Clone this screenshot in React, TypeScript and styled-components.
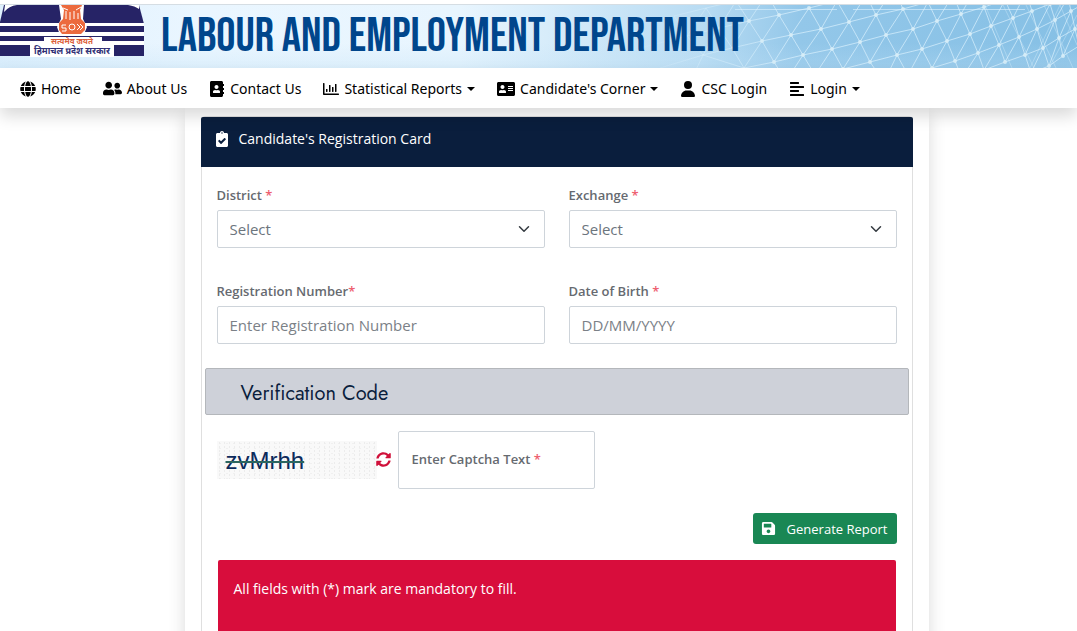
import React from 'react';
import styled, { createGlobalStyle } from 'styled-components';
import { FaGlobe, FaUserFriends, FaAddressBook, FaRegChartBar, FaAddressCard, FaAlignLeft, FaSave, FaSyncAlt, FaClipboardCheck } from 'react-icons/fa';
import { FaUser } from 'react-icons/fa6';

const Global = createGlobalStyle`
  *, *::before, *::after { box-sizing: border-box; }
  body {
    margin: 0;
    background: #fff;
    color: #212529;
    font-family: "Open Sans", "Noto Sans", sans-serif;
    font-size: 14px;
    line-height: 20px;
  }
`;

const Banner = styled.header`
  position: relative;
  display: flex;
  align-items: flex-start;
  height: 64px;
  margin-top: 4px;
  overflow: hidden;
  border-top: 1px solid #d5dde3;
  background:
    linear-gradient(to bottom, transparent 60%, rgba(190, 224, 246, 0.3)),
    linear-gradient(to right, #dff0fd 0, #eaf6ff 200px, #e8f5fe 460px, #b9dcf3 700px, #93c7e9 800px, #86c0e5 100%);
`;

const Mesh = styled.svg`
  position: absolute;
  top: 0;
  left: 600px;
`;

const Emblem = styled.svg`
  flex: none;
  position: relative;
`;

const Title = styled.h1`
  position: relative;
  margin: 0 0 0 16px;
  color: #00468c;
  font: 400 48px/64px "Bebas Neue", "Liberation Sans Narrow", "Liberation Sans", sans-serif;
  white-space: nowrap;
`;

const Nav = styled.nav`
  position: relative;
  display: flex;
  align-items: center;
  gap: 22px;
  height: 40px;
  padding: 1px 20px 0;
  background: #fff;
  box-shadow: 0 8px 16px rgba(0, 0, 0, 0.15);
  z-index: 1;
`;

const NavLink = styled.a`
  display: flex;
  align-items: center;
  gap: 5px;
  color: #000;
  font-family: "Noto Sans", "Open Sans", sans-serif;
  text-decoration: none;
  white-space: nowrap;
`;

const Caret = styled.span`
  border: 4px solid transparent;
  border-top-color: #000;
  border-bottom: 0;
`;

const Page = styled.div`
  padding-left: 36px;
`;

const Panel = styled.main`
  width: 744px;
  max-width: 100%;
  margin: 0 auto;
  padding: 8px 16px 16px;
  background: #fff;
  box-shadow: 0 8px 16px rgba(0, 0, 0, 0.15);
`;

const Card = styled.form`
  border: 1px solid #dfdfdf;
  border-radius: 4px;
`;

const CardHeader = styled.div`
  display: flex;
  align-items: center;
  gap: 9px;
  height: 50px;
  margin: 0 -1px;
  padding: 0 13px 7px;
  border-radius: 2px 2px 0 0;
  background: #0a1e3d;
  color: #fff;
`;

const Heading = styled.h2`
  margin: 0;
  font-size: 14px;
  font-weight: 400;
  line-height: 20px;
`;

const Fields = styled.div`
  display: grid;
  grid-template-columns: 1fr 1fr;
  gap: 24px;
  padding: 18px 15px 24px;
`;

const Field = styled.div`
  display: flex;
  flex-direction: column;
  gap: 5px;
`;

const Label = styled.label`
  color: #666a70;
  font-size: 13px;
  font-weight: 550;
  line-height: 20px;
`;

const Star = styled.span`
  color: #ee6070;
`;

const control = `
  width: 100%;
  height: 38px;
  padding: 0 12px;
  border: 1px solid #ced4da;
  border-radius: 2px;
  background: #fff;
  color: #6c757d;
  font: 400 15px/22px "Open Sans", "Noto Sans", sans-serif;
  appearance: none;
`;

const Input = styled.input`
  ${control}
  &::placeholder { color: #7b8187; opacity: 1; }
`;

const Select = styled.select`
  ${control}
`;

const SelectWrap = styled.div`
  position: relative;
  display: flex;
  margin-bottom: 9px;
`;

const Chevron = styled.svg`
  position: absolute;
  top: 13px;
  right: 15px;
  pointer-events: none;
`;

const Section = styled.h3`
  height: 47px;
  margin: 0 3px;
  padding: 0 35px;
  border: 1px solid #b4b7bb;
  border-radius: 2px;
  background: #ced1d9;
  color: #0a1e3d;
  font: 450 20px/49px "Jost", "Lato", sans-serif;
`;

const CaptchaRow = styled.div`
  display: flex;
  align-items: center;
  padding: 16px 15px;
`;

const Captcha = styled.div`
  display: flex;
  align-items: center;
  width: 160px;
  height: 38px;
  padding: 2px 0 0 9px;
  background-color: #f9f9f9;
  background-image: radial-gradient(#ececec 1px, transparent 1px), radial-gradient(#f0f0f0 1px, transparent 1px);
  background-size: 5px 4px, 7px 5px;
  color: #0c2a5c;
  font: 400 24px/36px "Liberation Sans", sans-serif;
`;

const Code = styled.span`
  text-decoration: line-through 2px #2c6660;
`;

const Refresh = styled.button`
  display: flex;
  padding: 0 0 2px;
  margin: 0 7px 0 -1px;
  border: 0;
  background: none;
  color: #d0103a;
`;

const CaptchaInput = styled(Input)`
  width: 197px;
  height: 58px;
`;

const CaptchaBox = styled.div`
  position: relative;
`;

const FloatingLabel = styled(Label)`
  position: absolute;
  top: 18px;
  left: 14px;
  font-weight: 650;
`;

const Actions = styled.div`
  display: flex;
  justify-content: flex-end;
  padding: 8px 15px 16px;
`;

const Submit = styled.button`
  display: flex;
  align-items: center;
  gap: 11px;
  height: 31px;
  padding: 0 9px 0 8px;
  border: 0;
  border-radius: 3px;
  background: #198754;
  color: #fff;
  font: 400 13px/20px "Open Sans", "Noto Sans", sans-serif;
`;

const Notice = styled.p`
  min-height: 88px;
  margin: 0 16px 16px;
  padding: 19px 16px;
  border-radius: 2px;
  background: #d80d3c;
  color: #fff;
`;

const links = [
  { label: 'Home', icon: FaGlobe, size: 16 },
  { label: 'About Us', icon: FaUserFriends, size: 19 },
  { label: 'Contact Us', icon: FaAddressBook, size: 16 },
  { label: 'Statistical Reports', icon: FaRegChartBar, size: 16, menu: true },
  { label: "Candidate's Corner", icon: FaAddressCard, size: 18, menu: true },
  { label: 'CSC Login', icon: FaUser, size: 16 },
  { label: 'Login', icon: FaAlignLeft, size: 16, menu: true },
];

function SelectField({ id, label }: { id: string; label: string }) {
  return (
    <Field>
      <Label htmlFor={id}>{label} <Star>*</Star></Label>
      <SelectWrap>
        <Select id={id}><option>Select</option></Select>
        <Chevron width="12" height="12" viewBox="0 0 16 16" fill="none" stroke="#343a40" strokeWidth="2" strokeLinecap="round" strokeLinejoin="round">
          <path d="m2 5 6 6 6-6" />
        </Chevron>
      </SelectWrap>
    </Field>
  );
}

// Triangular lattice: each row starts at a column; a node joins its right neighbour
// and the nodes of the same and the previous column in the next row.
const lattice: { start: number; nodes: [number, number][] }[] = [
  { start: -2, nodes: [[674, 16], [706, 8], [736, 1], [767, -6]] },
  { start: -2, nodes: [[687, 36], [719, 28], [749, 21], [779, 15], [809, 8], [837, 1], [866, -5], [894, -12]] },
  { start: -2, nodes: [[703, 55], [732, 48], [762, 41], [791, 35], [821, 29], [849, 22], [876, 15], [903, 9], [928, 2], [953, -5], [976, -12]] },
  { start: -1, nodes: [[744, 68], [774, 62], [803, 55], [832, 49], [860, 42], [886, 35], [913, 29], [937, 21], [961, 14], [984, 7], [1005, 0], [1026, -8]] },
  { start: 0, nodes: [[786, 81], [815, 75], [843, 69], [870, 62], [897, 55], [922, 49], [947, 41], [970, 34], [991, 26], [1013, 18], [1032, 11], [1050, 4], [1068, -3]] },
  { start: 3, nodes: [[884, 82], [908, 75], [932, 68], [955, 61], [978, 53], [999, 45], [1019, 37], [1037, 29], [1055, 20], [1071, 11], [1087, 2]] },
  { start: 6, nodes: [[962, 78], [984, 70], [1005, 62], [1025, 55], [1043, 48], [1059, 38], [1075, 29]] },
  { start: 9, nodes: [[1031, 73], [1049, 66], [1063, 56], [1079, 46]] },
];

const edges = lattice.flatMap(({ start, nodes }, r) =>
  nodes.flatMap(([x, y], i) => {
    const below = lattice[r + 1];
    const col = start + i;
    const targets = [nodes[i + 1], below?.nodes[col - below.start], below?.nodes[col - 1 - below.start]];
    return targets.filter(Boolean).map(([tx, ty]) => `M${x} ${y}L${tx} ${ty}`);
  }),
).join('');

function MeshArt() {
  return (
    <Mesh width="480" height="64" viewBox="600 5 480 64" aria-hidden="true">
      <defs>
        <linearGradient id="fade" gradientUnits="userSpaceOnUse" x1="640" y1="0" x2="790" y2="0">
          <stop offset="0" stopColor="#e6f6ff" stopOpacity="0.1" />
          <stop offset="1" stopColor="#e0f4ff" stopOpacity="0.65" />
        </linearGradient>
      </defs>
      <g stroke="url(#fade)" fill="none">
        <path d={edges} />
        <path d="M640 48 687 36M660 68 703 55 744 68M703 55 695 72" />
        <path strokeOpacity=".5" d="M985 5 1012 68M1003 5 1034 68M1026 5 1056 68M1044 5 1073 68M1060 5 1077 45M1077 15 1049 68M1060 5 1030 68" />
      </g>
      <path d="M735 9.500h102M853 9.500h172" stroke="#e0f4ff" strokeOpacity=".6" />
      <g fill="#d8edf7" fillOpacity=".85">
        {lattice.slice(1).flatMap(({ nodes }) => nodes).filter(([x]) => x > 745).map(([x, y]) => <circle key={`${x}-${y}`} cx={x} cy={y} r="2" />)}
      </g>
    </Mesh>
  );
}

function EmblemArt() {
  return (
    <Emblem width="145" height="64" viewBox="0 5 145 64" role="img" aria-label="Himachal Pradesh Government">
      <path fill="#262366" d="M4 5h135l5 19v32H0V22z" />
      <path fill="#fff" d="M5 5h12q-8 1-13 7zM128 5h11v4q-4-3-11-4zM0 23h144v3H0zM0 32h144v4H0zM0 41h144v4H0zM44 37h58v9H44zM30 45h84v12H30z" />
      <path fill="#fff" d="M59 5h25l-1 14 4 8-3 7-24 1-3-8 4-8z" />
      <path fill="#ec6a3e" d="M61 5h21l-2 5 1 9 4 4v7l-4 4H62l-3-4v-7l4-4 1-9z" />
      <path stroke="#fff" fill="none" d="M66 11v8M70 12v8M74 11v8M78 13v6M63 8l5 2M76 10l5-3" />
      <circle cx="72" cy="27" r="3" fill="none" stroke="#fff" />
      <path stroke="#fff" fill="none" d="M66 25h-4v3h4v3h-4M77 24l3 3-3 3M80 24l3 3-3 3" />
      <g fontFamily='"Noto Sans Devanagari", "Noto Sans", sans-serif' fontWeight="700" textAnchor="middle">
        <text x="72" y="44" fontSize="8" fill="#dc623c">सत्यमेव जयते</text>
        <text x="72" y="54" fontSize="9" fill="#302f75">हिमाचल प्रदेश सरकार</text>
      </g>
    </Emblem>
  );
}

export default function App() {
  return (
    <>
      <Global />
      <Banner>
        <MeshArt />
        <EmblemArt />
        <Title>LABOUR AND EMPLOYMENT DEPARTMENT</Title>
      </Banner>
      <Nav>
        {links.map(({ label, icon: Icon, size, menu }) => (
          <NavLink href="#" key={label}>
            <Icon size={size} />{label}{menu && <Caret />}
          </NavLink>
        ))}
      </Nav>
      <Page>
        <Panel>
          <Card>
            <CardHeader>
              <FaClipboardCheck size={16} />
              <Heading>Candidate's Registration Card</Heading>
            </CardHeader>
            <Fields>
              <SelectField id="district" label="District" />
              <SelectField id="exchange" label="Exchange" />
              <Field>
                <Label htmlFor="regno">Registration Number<Star>*</Star></Label>
                <Input id="regno" placeholder="Enter Registration Number" />
              </Field>
              <Field>
                <Label htmlFor="dob">Date of Birth <Star>*</Star></Label>
                <Input id="dob" placeholder="DD/MM/YYYY" />
              </Field>
            </Fields>
            <Section>Verification Code</Section>
            <CaptchaRow>
              <Captcha><Code>zvMrhh</Code></Captcha>
              <Refresh type="button" aria-label="Refresh captcha"><FaSyncAlt size={15} /></Refresh>
              <CaptchaBox>
                <CaptchaInput id="captcha" />
                <FloatingLabel htmlFor="captcha">Enter Captcha Text <Star>*</Star></FloatingLabel>
              </CaptchaBox>
            </CaptchaRow>
            <Actions>
              <Submit type="button"><FaSave size={15} />Generate Report</Submit>
            </Actions>
            <Notice>All fields with (*) mark are mandatory to fill.</Notice>
          </Card>
        </Panel>
      </Page>
    </>
  );
}
